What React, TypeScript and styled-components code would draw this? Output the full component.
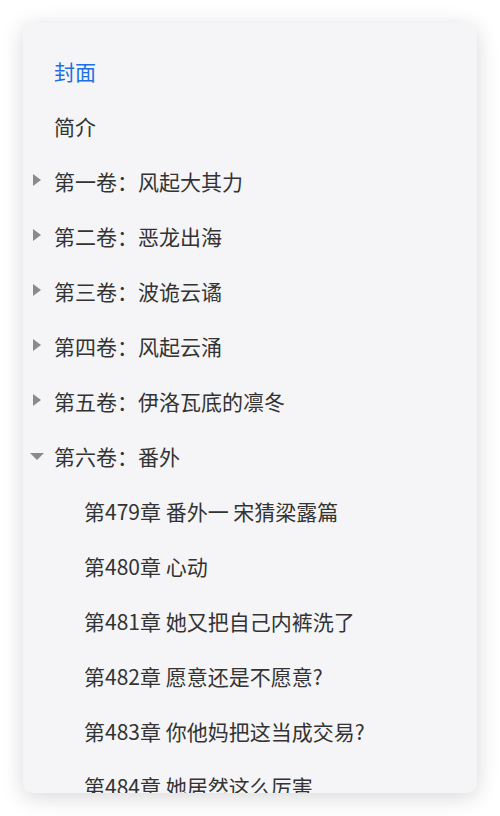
import React, { useState } from 'react';
import styled, { createGlobalStyle } from 'styled-components';

type Volume = {
    title: string;
    chapters: string[];
};

const volumes: Volume[] = [
    { title: '第一卷：风起大其力', chapters: [] },
    { title: '第二卷：恶龙出海', chapters: [] },
    { title: '第三卷：波诡云谲', chapters: [] },
    { title: '第四卷：风起云涌', chapters: [] },
    { title: '第五卷：伊洛瓦底的凛冬', chapters: [] },
    {
        title: '第六卷：番外',
        chapters: [
            '第479章 番外一 宋猜梁露篇',
            '第480章 心动',
            '第481章 她又把自己内裤洗了',
            '第482章 愿意还是不愿意?',
            '第483章 你他妈把这当成交易?',
            '第484章 她居然这么厉害',
        ],
    },
];

const App = () => {
    const [open, setOpen] = useState<number>(5);

    return (
        <>
            <GlobalStyle />
            <Card>
                <Row $active>封面</Row>
                <Row>简介</Row>
                {volumes.map((volume, index) => (
                    <React.Fragment key={volume.title}>
                        <Row onClick={() => setOpen(open === index ? -1 : index)}>
                            <Arrow $open={open === index} />
                            {volume.title}
                        </Row>
                        {open === index &&
                            volume.chapters.map((chapter) => (
                                <Row key={chapter} $nested>
                                    {chapter}
                                </Row>
                            ))}
                    </React.Fragment>
                ))}
            </Card>
        </>
    );
};

const GlobalStyle = createGlobalStyle`
    body {
        margin: 0;
        background: #ffffff;
        font-family: "Noto Sans CJK SC", "Noto Sans", sans-serif;
    }
`;

const Card = styled.nav`
    margin: 23px;
    height: 770px;
    box-sizing: border-box;
    padding: 20px 0 0 31px;
    background: #f5f5f7;
    border-radius: 10px;
    box-shadow: 0 4px 22px rgba(0, 0, 0, 0.16);
    overflow: hidden;
`;

const Row = styled.div<{ $active?: boolean; $nested?: boolean }>`
    position: relative;
    height: 55px;
    display: flex;
    align-items: center;
    padding-left: ${(p) => (p.$nested ? '30px' : '0')};
    font-size: 21px;
    color: ${(p) => (p.$active ? '#1e6fe6' : '#333333')};
    white-space: nowrap;
    cursor: pointer;
`;

const Arrow = styled.span<{ $open: boolean }>`
    position: absolute;
    width: 0;
    height: 0;
    ${(p) =>
        p.$open
            ? `
        left: -24px;
        top: 25px;
        border-left: 7px solid transparent;
        border-right: 7px solid transparent;
        border-top: 7px solid #8a8a8a;
    `
            : `
        left: -21px;
        top: 21px;
        border-top: 6px solid transparent;
        border-bottom: 6px solid transparent;
        border-left: 8px solid #8a8a8a;
    `}
`;

export default App;
